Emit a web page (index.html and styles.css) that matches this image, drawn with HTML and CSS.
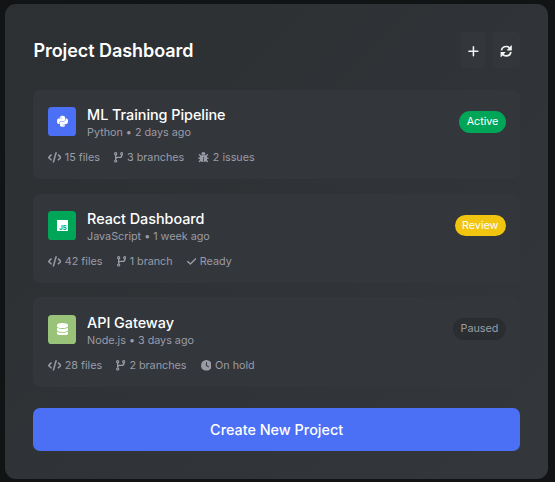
FILE: index.html
```html
<!DOCTYPE html>
<html lang="en">
<head>
<meta charset="utf-8">
<title>Project Dashboard</title>
<link rel="stylesheet" href="styles.css">
</head>
<body>
<svg width="0" height="0" class="sprite" aria-hidden="true">
  <symbol id="code" viewBox="0 0 640 512"><path stroke="currentColor" stroke-width="12" d="M392.8 1.2c-17-4.9-34.7 5-39.6 22l-128 448c-4.9 17 5 34.7 22 39.6s34.7-5 39.6-22l128-448c4.9-17-5-34.7-22-39.6zm80.6 120.1c-12.5 12.5-12.5 32.8 0 45.3L562.7 256l-89.4 89.4c-12.5 12.5-12.5 32.8 0 45.3s32.8 12.5 45.3 0l112-112c12.5-12.5 12.5-32.8 0-45.3l-112-112c-12.5-12.5-32.8-12.5-45.3 0zm-306.7 0c-12.5-12.5-32.8-12.5-45.3 0l-112 112c-12.5 12.5-12.5 32.8 0 45.3l112 112c12.5 12.5 32.8 12.5 45.3 0s12.5-32.8 0-45.3L77.3 256l89.4-89.4c12.5-12.5 12.5-32.8 0-45.3z"/></symbol>
  <symbol id="branch" viewBox="0 0 448 512"><g fill="none" stroke="currentColor"><circle cx="80" cy="80" r="52" stroke-width="56"/><circle cx="368" cy="80" r="52" stroke-width="56"/><circle cx="80" cy="432" r="52" stroke-width="56"/><path stroke-width="64" d="M80 140v232M368 140v20c0 53-43 96-96 96H176c-53 0-96 43-96 96"/></g></symbol>
  <symbol id="bug" viewBox="0 0 512 512"><path d="M256 0c53 0 96 43 96 96v3.600c0 15.700-12.700 28.400-28.400 28.400H188.400c-15.700 0-28.400-12.700-28.400-28.400V96c0-53 43-96 96-96z"/><path d="M176 160h160c30 0 58 12 76 32 12 20 20 40 20 64v80c0 80-70 144-160 144V232h-32v248c-90 0-160-64-160-144v-80c0-24 8-44 20-64 18-20 46-32 76-32z"/><path fill="none" stroke="currentColor" stroke-width="64" stroke-linecap="round" d="M64 128l72 68M448 128l-72 68M32 288h80M480 288h-80M64 448l72-68M448 448l-72-68"/></symbol>
  <symbol id="check" viewBox="0 0 448 512"><path fill="none" stroke="currentColor" stroke-width="64" stroke-linecap="round" stroke-linejoin="round" d="M416 128L160 384 32 256"/></symbol>
  <symbol id="clock" viewBox="0 0 512 512"><path fill-rule="evenodd" d="M256 0a256 256 0 1 1 0 512A256 256 0 1 1 256 0zM232 120v136c0 8 4 15.500 10.700 20l96 64c11 7.400 25.900 4.400 33.300-6.700s4.400-25.900-6.700-33.300L280 243.200V120c0-13.300-10.700-24-24-24s-24 10.700-24 24z"/></symbol>
  <symbol id="plus" viewBox="0 0 448 512"><path fill="none" stroke="currentColor" stroke-width="64" stroke-linecap="round" d="M224 70v372M38 256h372"/></symbol>
  <symbol id="refresh" viewBox="0 0 512 512"><g id="arrow"><path fill="none" stroke="currentColor" stroke-width="70" d="M60 222C80 120 160 62 256 62c62 0 116 26 152 70"/><path d="M488 28v180c0 10-6 16-16 16H304c-14 0-20-16-10-26L462 18c10-10 26-4 26 10z"/></g><use href="#arrow" transform="rotate(180 256 256)"/></symbol>
  <symbol id="python" viewBox="0 0 448 512"><path d="M439.8 200.5c-7.7-30.9-22.3-54.2-53.4-54.2h-40.1v47.4c0 36.8-31.2 67.8-66.8 67.8H172.7c-29.2 0-53.4 25-53.4 54.3v101.800c0 29 25.200 46 53.4 54.300 33.800 9.900 66.300 11.700 106.800 0 26.900-7.800 53.400-23.500 53.400-54.300v-40.700H226.200v-13.600h160.200c31.100 0 42.600-21.700 53.400-54.200 11.200-33.500 10.700-65.700 0-108.600zM286.200 404c11.100 0 20.100 9.100 20.100 20.300 0 11.300-9 20.400-20.100 20.400-11 0-20.100-9.200-20.100-20.400.1-11.300 9.100-20.300 20.100-20.300zM167.800 248.100h106.800c29.700 0 53.400-24.500 53.400-54.300V91.900c0-29-24.400-50.700-53.400-55.600-35.800-5.900-74.700-5.600-106.800.1-45.200 8-53.400 24.700-53.400 55.600v40.700h106.900v13.600h-147c-31.100 0-58.300 18.700-66.800 54.200-9.800 40.700-10.200 66.100 0 108.600 7.600 31.600 25.700 54.200 56.800 54.200H101v-48.800c0-35.300 30.500-66.400 66.800-66.400zm-6.700-142.600c-11.100 0-20.100-9.100-20.100-20.300.1-11.300 9-20.400 20.100-20.400 11 0 20.100 9.200 20.100 20.400s-9 20.300-20.100 20.300z"/></symbol>
  <symbol id="database" viewBox="0 0 448 512"><path d="M448 80v48c0 44.200-100.300 80-224 80S0 172.200 0 128V80C0 35.800 100.300 0 224 0s224 35.800 224 80zM393.200 214.700c20.800-7.400 39.900-16.900 54.800-28.600V288c0 44.200-100.300 80-224 80S0 332.200 0 288V186.100c14.900 11.800 34 21.200 54.800 28.600C99.700 230.700 159.500 240 224 240s124.300-9.300 169.200-25.300zM0 346.100c14.900 11.800 34 21.200 54.800 28.600C99.700 390.700 159.500 400 224 400s124.300-9.300 169.200-25.300c20.800-7.400 39.900-16.900 54.800-28.600V432c0 44.200-100.300 80-224 80S0 476.200 0 432V346.100z"/></symbol>
</svg>
<main class="panel">
  <header class="header">
    <h1>Project Dashboard</h1>
    <div class="actions">
      <button class="action" aria-label="Add"><svg class="i448"><use href="#plus"/></svg></button>
      <button class="action" aria-label="Refresh"><svg class="i512"><use href="#refresh"/></svg></button>
    </div>
  </header>
  <section class="list">
    <article class="card">
      <div class="top">
        <div class="logo blue"><svg class="i448"><use href="#python"/></svg></div>
        <div class="info"><h2>ML Training Pipeline</h2><p>Python • 2 days ago</p></div>
        <span class="badge active">Active</span>
      </div>
      <div class="stats">
        <span><svg class="i640"><use href="#code"/></svg>15 files</span>
        <span><svg class="i448"><use href="#branch"/></svg>3 branches</span>
        <span><svg class="i512"><use href="#bug"/></svg>2 issues</span>
      </div>
    </article>
    <article class="card">
      <div class="top">
        <div class="logo green"><span class="js">JS</span></div>
        <div class="info"><h2>React Dashboard</h2><p>JavaScript • 1 week ago</p></div>
        <span class="badge review">Review</span>
      </div>
      <div class="stats">
        <span><svg class="i640"><use href="#code"/></svg>42 files</span>
        <span><svg class="i448"><use href="#branch"/></svg>1 branch</span>
        <span><svg class="i448"><use href="#check"/></svg>Ready</span>
      </div>
    </article>
    <article class="card">
      <div class="top">
        <div class="logo lime"><svg class="i448"><use href="#database"/></svg></div>
        <div class="info"><h2>API Gateway</h2><p>Node.js • 3 days ago</p></div>
        <span class="badge paused">Paused</span>
      </div>
      <div class="stats">
        <span><svg class="i640"><use href="#code"/></svg>28 files</span>
        <span><svg class="i448"><use href="#branch"/></svg>2 branches</span>
        <span><svg class="i512"><use href="#clock"/></svg>On hold</span>
      </div>
    </article>
  </section>
  <button class="create">Create New Project</button>
</main>
</body>
</html>
```
FILE: styles.css
```css
* { box-sizing: border-box; margin: 0; }
body {
  height: 482px;
  padding: 3.6px 6.6px 2.6px 4.8px;
  overflow: hidden;
  background: #121315;
  font-family: Inter, "Liberation Sans", sans-serif;
  color: #fff;
}
.sprite { position: absolute; }
svg { display: block; fill: currentColor; flex: none; height: 1em; }
.i448 { width: .875em; }
.i512 { width: 1em; }
.i640 { width: 1.25em; }
button { border: 0; padding: 0; font-family: inherit; color: inherit; }
.panel {
  height: 475.8px;
  padding: 28.7px 28.6px;
  border-radius: 11px;
  background: linear-gradient(135deg, #2c3032, #33363b);
}
.header { display: flex; justify-content: space-between; align-items: center; height: 36px; margin-bottom: 21.6px; }
h1 { padding-top: 1px; font-size: 18px; font-weight: 600; line-height: 22px; letter-spacing: -.06px; }
.actions { display: flex; gap: 7.2px; }
.action {
  display: flex;
  align-items: center;
  justify-content: center;
  height: 36px;
  padding: 1px 7.2px 0;
  border-radius: 4px;
  background: #33363b;
  font-size: 12.4px;
  color: #f4f4f4;
}
.list { display: flex; flex-direction: column; gap: 14.4px; margin-bottom: 21.6px; }
.card { height: 89.3px; padding: 14.4px 14.3px; border-radius: 7px; background: #33363b; }
.top { display: flex; align-items: center; height: 35px; }
.logo {
  display: flex;
  align-items: center;
  justify-content: center;
  width: 28.8px;
  height: 28.8px;
  margin-right: 10.6px;
  border-radius: 3.6px;
  font-size: 12.6px;
}
.blue { background: #4b70f5; }
.green { background: #00a657; }
.lime { background: #98c379; }
.js {
  display: flex;
  align-items: flex-end;
  justify-content: flex-end;
  width: 11px;
  height: 11px;
  padding-right: 1px;
  background: #fff;
  color: #00a657;
  font: 700 6px/6px Inter, sans-serif;
}
.info { flex: 1; padding-top: 4px; }
h2 { font-size: 14.4px; font-weight: 500; line-height: 18px; letter-spacing: -.04px; }
p { font-size: 10.8px; line-height: 17px; letter-spacing: -.02px; color: #9a9ca8; }
.badge {
  height: 21.6px;
  padding: 0 7.2px;
  border-radius: 11px;
  font-size: 10.8px;
  line-height: 21.6px;
  letter-spacing: -.04px;
}
.active { background: #00a657; }
.review { background: #f1c40f; }
.paused { background: #2a2e30; color: #9a9ca8; }
.stats { display: flex; gap: 14.2px; margin-top: 10px; font-size: 10.8px; line-height: 17px; letter-spacing: -.02px; color: #9a9ca8; }
.stats span { display: flex; align-items: center; gap: 3.6px; }
.create {
  display: block;
  width: 100%;
  height: 43px;
  border-radius: 7px;
  background: #4b70f5;
  font-size: 14.4px;
  font-weight: 450;
}
```
